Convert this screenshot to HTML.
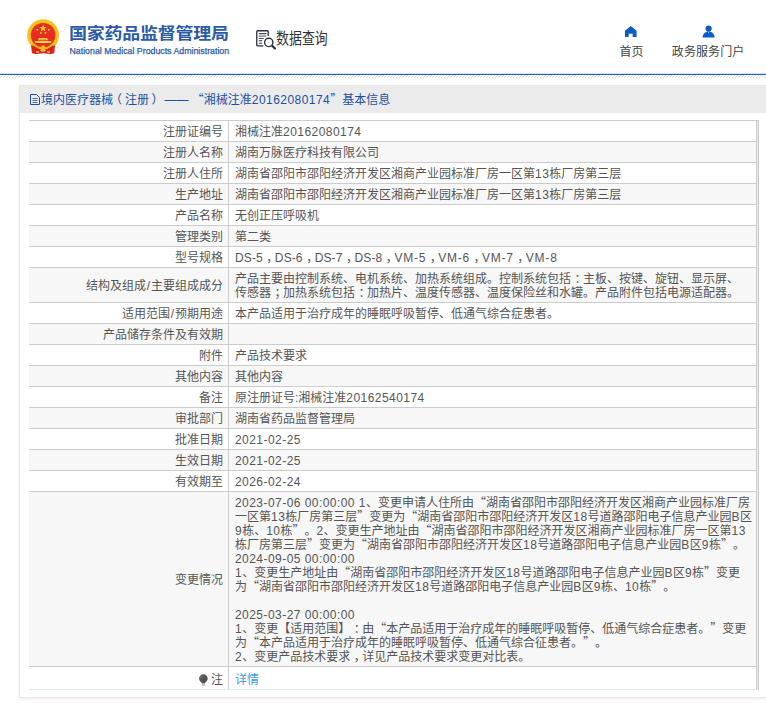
<!DOCTYPE html>
<html lang="zh-CN">
<head>
<meta charset="utf-8">
<title>国家药品监督管理局 数据查询</title>
<style>
html,body{margin:0;padding:0;background:#fff;}
body{text-spacing-trim:space-all;width:766px;height:708px;overflow:hidden;position:relative;font-family:"Liberation Sans","Noto Sans CJK SC",sans-serif;font-size:12px;color:#555;}
.hdr{position:absolute;left:0;top:0;width:766px;height:73px;background:#fff;}
.emblem{position:absolute;left:26px;top:18px;}
.t1{position:absolute;left:69px;top:22.400px;font-size:18px;line-height:24px;font-weight:bold;color:#2a5aa8;white-space:nowrap;letter-spacing:-0.25px;transform:scaleY(0.89);transform-origin:0 50%;}
.t2{position:absolute;left:69.500px;top:44.500px;font-size:8.790px;line-height:12px;color:#2a5aa8;white-space:nowrap;-webkit-text-stroke:0.25px #2a5aa8;}
.q{position:absolute;left:276px;top:28.600px;font-size:15.500px;line-height:20px;color:#333;white-space:nowrap;transform:scaleX(0.835);transform-origin:0 50%;}
.qi{position:absolute;left:250px;top:25px;}
.nav{position:absolute;top:44px;font-size:12px;line-height:16px;color:#444;white-space:nowrap;}
.ni{position:absolute;}
.bl{position:absolute;left:0;top:73px;width:766px;height:2px;background:linear-gradient(#cfe0f3 0,#cfe0f3 1px,#1a67c3 1px,#1a67c3 2px);}
.hatch{position:absolute;left:0;top:75px;width:766px;height:3px;background:repeating-linear-gradient(135deg,#dedede 0,#dedede 0.700px,#fff 0.700px,#fff 2.121px);}
.box{position:absolute;left:19px;top:85px;width:800px;height:611px;border:1px solid #e6e6e6;box-shadow:0 1px 3px rgba(0,0,0,0.08);background:#fff;}
.bh{position:absolute;left:0;top:0;width:800px;height:27px;background:#ebebeb;}
.bt{position:absolute;left:21px;top:6px;font-size:12px;line-height:16px;color:#1e50a2;white-space:nowrap;}
.bi{position:absolute;left:10px;top:8px;}
table{position:absolute;left:9px;top:34px;width:728px;border-collapse:collapse;border-top:1px solid #ccc;table-layout:fixed;}
td{border-bottom:1px solid #ccc;padding:4px 4.500px 2px 6.500px;line-height:14px;font-size:12px;vertical-align:middle;}
td.k{width:187.500px;text-align:right;border-right:1px solid #ccc;white-space:nowrap;}
td.v{border-right:1px solid #ccc;white-space:nowrap;}
tr.g td{background:#f7f7f7;}
tr:last-child td{border-bottom:1px solid #e3e9f0;padding-top:6px;}
.l{letter-spacing:0.45px;}
.sl{margin:0 0.800px;}
.l1{letter-spacing:0.12px;}
.l2{letter-spacing:0.78px;}
.lnk{color:#3b99f2;}
.p{position:relative;left:3.500px;}
.pl{position:relative;left:-3px;}
.pr{position:relative;left:2.500px;}
.c{font-family:"Noto Sans CJK SC",sans-serif;line-height:0;}
.bulb{vertical-align:-2px;margin-right:2.500px;}
.tr2{position:absolute;left:737px;top:34px;width:1px;height:569px;background:#e6ebf2;border-right:1px solid #ccc;border-top:1px solid #ccc;}
</style>
</head>
<body>
<div class="hdr">
<svg class="emblem" width="36" height="40" viewBox="0 0 36 40">
<circle cx="17.100" cy="17.200" r="15.900" fill="#f5c21b"/>
<path d="M5 27.400L6 35.300Q9.500 36.200 12.500 35.700L17.100 35.200L21.700 35.700Q24.700 36.200 28.200 35.300L29 27.400Z" fill="#df211b"/>
<circle cx="17.100" cy="17.200" r="12.700" fill="#e9a90f"/>
<circle cx="17.100" cy="17.200" r="12.200" fill="#e82c24"/>
<path d="M30.21 19.99A13.4 13.4 0 0 1 3.99 19.99" stroke="#f5c21b" stroke-width="1.300" fill="none"/>
<path d="M17.100 6.400l.95 2.700h2.850l-2.300 1.700.85 2.750-2.350-1.650-2.350 1.650.85-2.750-2.300-1.700h2.850z" fill="#f7cd2e"/>
<circle cx="11.400" cy="11.800" r="1.050" fill="#f7cd2e"/><circle cx="22.800" cy="11.800" r="1.050" fill="#f7cd2e"/><circle cx="14.800" cy="15" r="1.050" fill="#f7cd2e"/><circle cx="19.400" cy="15" r="1.050" fill="#f7cd2e"/>
<path d="M13.200 19.900h7.800l.9 1.100h-9.600z M12 21.300h10.200v1H12z M8.600 23h17l-.9 2H9.500z" fill="#f8d247"/>
<circle cx="17.100" cy="28.700" r="1.400" fill="#f5c21b"/>
<path d="M14.500 29.200Q17.100 27.200 19.700 29.200L18.500 30.300H15.700Z" fill="#f5c21b"/>
<ellipse cx="17.050" cy="32.300" rx="2.900" ry="1.400" fill="#f7cd2e"/>
<path d="M9.700 32.700L11.400 33.600L13.100 32.700L12.300 35.300H10.600Z M21 32.700L22.700 33.600L24.100 32.700L23.500 35.300H21.800Z" fill="#f5c21b"/>
</svg>
<div class="t1">国家药品监督管理局</div>
<div class="t2">National Medical Products Administration</div>
<svg class="qi" width="30" height="30" viewBox="0 0 30 30" fill="none" stroke="#2b2b42" stroke-linecap="round" stroke-linejoin="round">
<path d="M18.250 10.400V6.700Q18.250 5.750 17.300 5.750H7.700Q6.750 5.750 6.750 6.700V20Q6.750 20.950 7.700 20.950H12.900" stroke-width="1.300"/>
<path d="M9.200 8.500H16M9.200 11.100H16M9.200 13.500H13.300M9.200 15.600H11.800M9.200 18.300H11.800" stroke-width="0.900" stroke="#3a3a50"/>
<path d="M9.200 9.800H16M9.200 16.900H11.800" stroke-width="1.600" stroke="#c4c4cc" stroke-linecap="butt"/>
<circle cx="18.750" cy="17.400" r="4.150" stroke-width="1.350"/>
<path d="M22.100 20.700L25 23.500" stroke-width="2.100"/>
</svg>
<div class="q">数据查询</div>
<svg class="ni" style="left:625.450px;top:25.600px" width="11.600" height="11.400" viewBox="0 0 12 12" preserveAspectRatio="none"><path d="M6 0L0 5.100V12H3.800V8.100H7.900V12H12V5.100Z" fill="#0c5cc7"/></svg>
<div class="nav" style="left:619.400px">首页</div>
<svg class="ni" style="left:701.500px;top:24.500px" width="14" height="13" viewBox="0 0 14 13"><circle cx="6.600" cy="3.600" r="3.100" fill="#0c5cc7"/><path d="M0.500 12.450C0.800 9.500 2.500 7.300 4.800 6.800L5.900 6.300L6.600 8.500L7.300 6.300L8.400 6.800C10.700 7.300 12.400 9.500 12.700 12.450Z" fill="#0c5cc7"/></svg>
<div class="nav" style="left:671.800px;letter-spacing:0.1px">政务服务门户</div>
</div>
<div class="bl"></div>
<div class="hatch"></div>
<div class="box">
<div class="bh"></div>
<svg class="bi" width="10" height="11" viewBox="0 0 10 11" fill="none" stroke="#1e50a2" stroke-width="1"><path d="M0.500 0.500H6.500L9.500 3.500V10.500H0.500Z"/><path d="M2.500 4.500H7.500M2.500 6.500H7.500M2.500 8.500H7.500" stroke-width="0.800"/></svg>
<div class="bt">境内医疗器械<span class="pl">（</span>注册<span class="pr">）</span><span style="margin-left:3.400px">——</span> <span class="c">“</span>湘械注准<span class="l">20162080174</span><span class="c">”</span>基本信息</div>
<table>
<tr><td class="k">注册证编号</td><td class="v">湘械注准<span class="l">20162080174</span></td></tr>
<tr class="g"><td class="k">注册人名称</td><td class="v">湖南万脉医疗科技有限公司</td></tr>
<tr><td class="k">注册人住所</td><td class="v">湖南省邵阳市邵阳经济开发区湘商产业园标准厂房一区第<span class="l">13</span>栋厂房第三层</td></tr>
<tr class="g"><td class="k">生产地址</td><td class="v">湖南省邵阳市邵阳经济开发区湘商产业园标准厂房一区第<span class="l">13</span>栋厂房第三层</td></tr>
<tr><td class="k">产品名称</td><td class="v">无创正压呼吸机</td></tr>
<tr class="g"><td class="k">管理类别</td><td class="v">第二类</td></tr>
<tr><td class="k">型号规格</td><td class="v"><span class="l1">DS-5</span><span class="p">，</span><span class="l1">DS-6</span><span class="p">，</span><span class="l1">DS-7</span><span class="p">，</span><span class="l1">DS-8</span><span class="p">，</span><span class="l2">VM-5</span><span class="p">，</span><span class="l2">VM-6</span><span class="p">，</span><span class="l2">VM-7</span><span class="p">，</span><span class="l2">VM-8</span></td></tr>
<tr class="g"><td class="k">结构及组成<span class="sl">/</span>主要组成成分</td><td class="v">产品主要由控制系统、电机系统、加热系统组成。控制系统包括<span class="p">：</span>主板、按键、旋钮、显示屏、<br>传感器<span class="p">；</span>加热系统包括<span class="p">：</span>加热片、温度传感器、温度保险丝和水罐。产品附件包括电源适配器。</td></tr>
<tr><td class="k">适用范围<span class="sl">/</span>预期用途</td><td class="v">本产品适用于治疗成年的睡眠呼吸暂停、低通气综合症患者。</td></tr>
<tr class="g"><td class="k">产品储存条件及有效期</td><td class="v"></td></tr>
<tr><td class="k">附件</td><td class="v">产品技术要求</td></tr>
<tr class="g"><td class="k">其他内容</td><td class="v">其他内容</td></tr>
<tr><td class="k">备注</td><td class="v">原注册证号:湘械注准<span class="l">20162540174</span></td></tr>
<tr class="g"><td class="k">审批部门</td><td class="v">湖南省药品监督管理局</td></tr>
<tr><td class="k">批准日期</td><td class="v"><span class="l">2021-02-25</span></td></tr>
<tr class="g"><td class="k">生效日期</td><td class="v"><span class="l">2021-02-25</span></td></tr>
<tr><td class="k">有效期至</td><td class="v"><span class="l">2026-02-24</span></td></tr>
<tr class="g"><td class="k">变更情况</td><td class="v"><span class="l">2023-07-06 00:00:00 1</span>、变更申请人住所由<span class="c">“</span>湖南省邵阳市邵阳经济开发区湘商产业园标准厂房<br>一区第<span class="l">13</span>栋厂房第三层<span class="c">”</span>变更为<span class="c">“</span>湖南省邵阳市邵阳经济开发区<span class="l">18</span>号道路邵阳电子信息产业园<span class="l">B</span>区<br><span class="l">9</span>栋、<span class="l">10</span>栋<span class="c">”</span>。<span class="l">2</span>、变更生产地址由<span class="c">“</span>湖南省邵阳市邵阳经济开发区湘商产业园标准厂房一区第<span class="l">13</span><br>栋厂房第三层<span class="c">”</span>变更为<span class="c">“</span>湖南省邵阳市邵阳经济开发区<span class="l">18</span>号道路邵阳电子信息产业园<span class="l">B</span>区<span class="l">9</span>栋<span class="c">”</span>。<br><span class="l">2024-09-05 00:00:00</span><br><span class="l">1</span>、变更生产地址由<span class="c">“</span>湖南省邵阳市邵阳经济开发区<span class="l">18</span>号道路邵阳电子信息产业园<span class="l">B</span>区<span class="l">9</span>栋<span class="c">”</span>变更<br>为<span class="c">“</span>湖南省邵阳市邵阳经济开发区<span class="l">18</span>号道路邵阳电子信息产业园<span class="l">B</span>区<span class="l">9</span>栋、<span class="l">10</span>栋<span class="c">”</span>。<br><br><span class="l">2025-03-27 00:00:00</span><br><span class="l">1</span>、变更【适用范围】<span class="p">：</span>由<span class="c">“</span>本产品适用于治疗成年的睡眠呼吸暂停、低通气综合症患者。<span class="c">”</span>变更<br>为<span class="c">“</span>本产品适用于治疗成年的睡眠呼吸暂停、低通气综合征患者。<span class="c">”</span>。<br><span class="l">2</span>、变更产品技术要求<span class="p">，</span>详见产品技术要求变更对比表。</td></tr>
<tr><td class="k"><svg class="bulb" width="9" height="12" viewBox="0 0 9 12"><circle cx="4.400" cy="4.500" r="4.300" fill="#555"/><path d="M2.200 7.500H6.600L6 9.300H2.800Z" fill="#555"/><rect x="2.900" y="9.600" width="3" height="0.800" fill="#777"/><rect x="3.300" y="10.800" width="2.200" height="0.700" fill="#888"/><path d="M1.500 4.200A3 3 0 0 1 3.800 1.600" stroke="#999" stroke-width="0.700" fill="none"/></svg>注</td><td class="v"><a class="lnk">详情</a></td></tr>
</table>
<div class="tr2"></div>
</div>
</body>
</html>
